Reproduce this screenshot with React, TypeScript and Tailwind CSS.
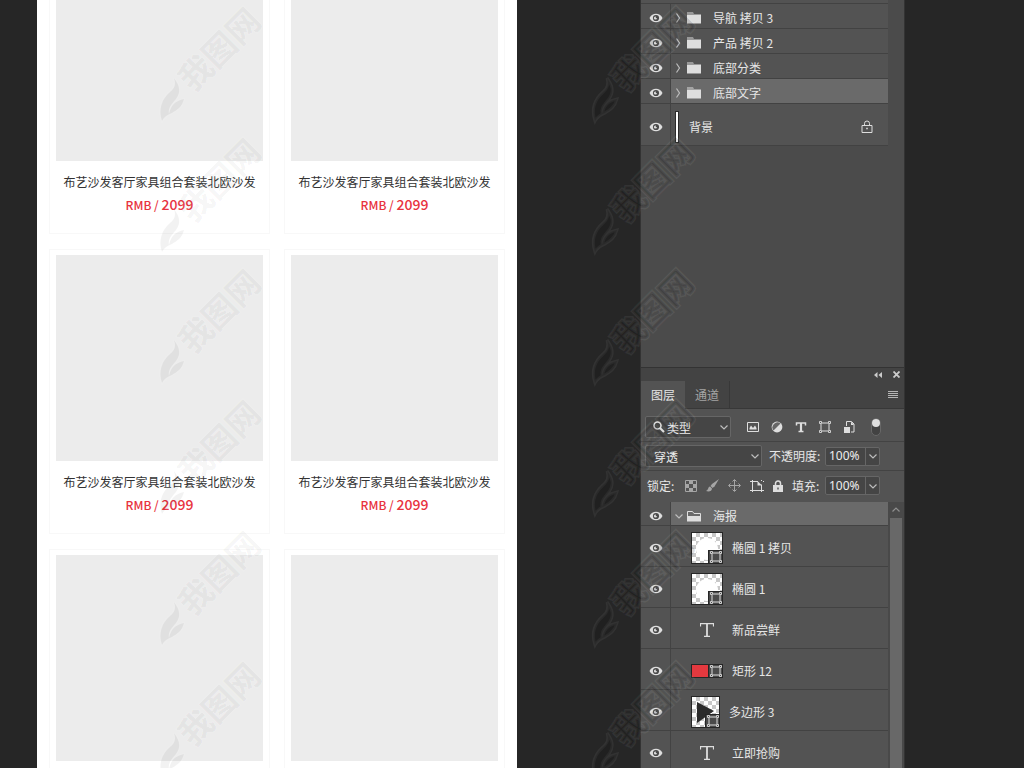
import { ReactNode } from "react";

const FONT = "font-['Noto_Sans_CJK_SC','Noto_Sans',sans-serif]";

function Eye() {
  return (
    <svg viewBox="0 0 14 10" className="h-[10px] w-[14px]" fill="none">
      <path d="M0.5 5C2 2 4.300 0.800 7 0.800S12 2 13.500 5C12 8 9.700 9.200 7 9.200S2 8 0.500 5Z" fill="#dedede" />
      <circle cx="7" cy="5" r="3.100" fill="#4a4a4a" />
      <circle cx="6.500" cy="5" r="1.600" fill="#dedede" />
      <circle cx="7.700" cy="4.200" r="1" fill="#4a4a4a" />
    </svg>
  );
}

function Chevron({ dir = "down", className = "" }: { dir?: "down" | "right" | "up"; className?: string }) {
  const d = {
    down: "M1.5 3.5 5 7l3.500-3.500",
    right: "M3.500 0.500 6.500 5 3.500 9.500",
    up: "M1.500 6.500 5 3l3.500 3.500",
  }[dir];
  return (
    <svg viewBox="0 0 10 10" className={`h-[10px] w-[10px] shrink-0 ${className}`} fill="none" stroke="#bdbdbd" strokeWidth="1.200">
      <path d={d} />
    </svg>
  );
}

function Folder({ open = false }: { open?: boolean }) {
  return (
    <svg viewBox="0 0 14 12" className="h-[12px] w-[14px] shrink-0" fill="none">
      {open ? (
        <path d="M0.500 7V1.500h5L7 3.500h6.500V7" stroke="#dedede" />
      ) : (
        <path d="M0 0.500h6l1 1H0Z" fill="#dedede" />
      )}
      <path d={open ? "M0 6h14v5.500H0Z" : "M0 2.500h14V11.500H0Z"} fill="#dedede" />
    </svg>
  );
}

function ShapeIcon() {
  return (
    <svg viewBox="0 0 12 12" className="h-3 w-3" fill="none" stroke="#dedede">
      <path d="M2 3v6M10 3v6M3 2h6M3 10h6" />
      <path d="M0.500 0.500h2v2h-2ZM9.500 0.500h2v2h-2ZM0.500 9.500h2v2h-2ZM9.500 9.500h2v2h-2Z" strokeWidth="0.900" />
    </svg>
  );
}

function Checker({ children, className }: { children?: ReactNode; className: string }) {
  return (
    <span
      className={`relative block h-8 border border-[#262626] bg-[conic-gradient(#c8c8c8_25%,#fff_0_50%,#c8c8c8_0_75%,#fff_0)] bg-[size:8px_8px] ${className}`}
    >
      {children}
      <span className="absolute right-0 bottom-0 flex h-[13px] w-[14px] items-center justify-center border-t border-l border-[#262626] bg-[#4a4a4a]">
        <ShapeIcon />
      </span>
    </span>
  );
}

const EllipseThumb = () => (
  <Checker className="w-8">
    <svg viewBox="0 0 30 30" className="block h-[30px] w-[30px]">
      <circle cx="15" cy="16" r="11" fill="#fff" />
    </svg>
  </Checker>
);

const PolygonThumb = () => (
  <Checker className="w-[29px]">
    <svg viewBox="0 0 27 30" className="block h-[30px] w-[27px]">
      <path d="M5 5 22 14 5 26Z" fill="#2b2b2b" />
    </svg>
  </Checker>
);

const RectThumb = () => (
  <span className="flex h-[14px] w-8 items-center justify-end border border-[#262626] bg-[#e4393f]">
    <span className="flex h-full w-[14px] items-center justify-center border-l border-[#262626] bg-[#4a4a4a]">
      <ShapeIcon />
    </span>
  </span>
);

const TextThumb = () => (
  <svg viewBox="0 0 14 14" className="ml-[9px] h-[14px] w-[14px]" fill="none" stroke="#dedede">
    <path d="M0.500 3.500V0.700h13v2.800M4 13.300h6" strokeWidth="1.200" />
    <path d="M7 1v12" strokeWidth="1.800" />
  </svg>
);

const groups = ["导航 拷贝 3", "产品 拷贝 2", "底部分类", "底部文字"];

const layers = [
  { name: "椭圆 1 拷贝", thumb: <EllipseThumb /> },
  { name: "椭圆 1", thumb: <EllipseThumb /> },
  { name: "新品尝鲜", thumb: <TextThumb /> },
  { name: "矩形 12", thumb: <RectThumb /> },
  { name: "多边形 3", thumb: <PolygonThumb />, tight: true },
  { name: "立即抢购", thumb: <TextThumb /> },
];

function Row({ children, height, selected = false }: { children: ReactNode; height: string; selected?: boolean }) {
  return (
    <li className={`flex shrink-0 ${height} border-b border-[#424242]`}>
      <button
        aria-label="显示图层"
        className="flex w-[30px] shrink-0 items-center justify-center border-r border-[#434343] pt-1"
      >
        <Eye />
      </button>
      <div className={`flex flex-1 items-center pt-1 ${selected ? "bg-[#6a6a6a]" : ""}`}>{children}</div>
    </li>
  );
}

function ProductCard({ caption = true }: { caption?: boolean }) {
  return (
    <article className="h-[285px] border border-[#f8f8f8] px-[6px] pt-[5px] text-center">
      <div className="h-[206px] bg-[#ececec]" />
      {caption && (
        <>
          <h3 className="mt-[11px] text-[12px] leading-5 text-[#333]">布艺沙发客厅家具组合套装北欧沙发</h3>
          <p className="text-[12px] leading-6 font-medium text-[#e8323e]">
            RMB / <span className="text-[14px]">2099</span>
          </p>
        </>
      )}
    </article>
  );
}

function Percent({ id }: { id: string }) {
  return (
    <span className="flex h-[19px] w-[55px] shrink-0 rounded-[2px] border border-[#666] bg-[#454545]">
      <input
        id={id}
        defaultValue="100%"
        className="w-[39px] bg-transparent pl-[3px] font-['Noto_Sans',sans-serif] text-[12px] text-[#eee] outline-none"
      />
      <button aria-label="调整数值" className="flex flex-1 items-center justify-center border-l border-[#666]">
        <Chevron />
      </button>
    </span>
  );
}

function Select({ label, value, className, inset }: { label: string; value: string; className: string; inset: string }) {
  return (
    <span className={`relative flex h-[22px] items-center ${className}`}>
      <select
        aria-label={label}
        className={`h-full w-full appearance-none rounded-[2px] border border-[#666] bg-[#454545] pt-[2px] text-[12px] text-[#eee] ${inset}`}
      >
        <option>{value}</option>
      </select>
      <Chevron className="pointer-events-none absolute right-[2px]" />
    </span>
  );
}

function FilterBar() {
  return (
    <div className="flex h-[33px] items-center border-b border-[#434343] pt-1 pl-1">
      <span className="relative flex items-center">
        <Select label="筛选" value="类型" className="w-[86px]" inset="pl-[21px]" />
        <svg viewBox="0 0 12 12" className="pointer-events-none absolute left-2 h-3 w-3" fill="none" stroke="#dedede">
          <circle cx="4.500" cy="4.500" r="3.500" strokeWidth="1.600" />
          <path d="m7 7 4 4" strokeWidth="2.200" />
        </svg>
      </span>
      <div className="ml-4 flex items-center gap-3">
        <button aria-label="像素图层">
          <svg viewBox="0 0 12 12" className="h-3 w-3" fill="none">
            <path d="M0.500 1.500h11v9H0.500Z" stroke="#dedede" />
            <path d="M2.500 8.500V7l1.500-2.500L6 7l2-2.500L9.500 7v1.500Z" fill="#dedede" />
          </svg>
        </button>
        <button aria-label="调整图层">
          <svg viewBox="0 0 12 12" className="h-3 w-3" fill="none">
            <circle cx="6" cy="6" r="5.400" fill="#dedede" />
            <path d="M2.500 9.500A5 5 0 0 1 9.500 2.500Z" fill="#666" />
          </svg>
        </button>
        <button aria-label="文字图层">
          <svg viewBox="0 0 12 12" className="h-3 w-3" fill="none" stroke="#dedede">
            <path d="M1.500 4.500V2h9v2.500M3.500 10.500h5" strokeWidth="1.500" />
            <path d="M6 2v8.500" strokeWidth="2.200" />
          </svg>
        </button>
        <button aria-label="形状图层">
          <ShapeIcon />
        </button>
        <button aria-label="智能对象">
          <svg viewBox="0 0 12 12" className="h-3 w-3" fill="none">
            <path d="M3.500 5V0.500h5l2.500 2.500V11H8" stroke="#dedede" />
            <path d="M8 0.500V4h3M1 6h6v6H1Z" fill="#dedede" />
          </svg>
        </button>
      </div>
      <button
        aria-label="图层过滤开关"
        className="ml-4 flex h-[18px] w-[10px] items-start rounded-full border border-[#686868] bg-[#424242]"
      >
        <span className="block h-2 w-2 rounded-full bg-[#dedede]" />
      </button>
    </div>
  );
}

function LockBar() {
  return (
    <div className="flex h-[31px] items-center pb-[2px] pl-[6px]">
      <span className="w-[32px] whitespace-nowrap">锁定:</span>
      <div className="ml-[6px] flex items-center gap-[9px]">
        <button aria-label="锁定透明像素">
          <svg viewBox="0 0 12 12" className="h-3 w-3" fill="none">
            <path d="M0.500 0.500h11v11H0.500Z" stroke="#a5a5a5" />
            <path d="M4 1h4v3H4ZM1 4h3v4H1ZM8 4h3v4H8ZM4 8h4v3H4Z" fill="#a5a5a5" />
          </svg>
        </button>
        <button aria-label="锁定图像像素">
          <svg viewBox="0 0 13 13" className="h-[13px] w-[13px]" fill="#a5a5a5">
            <path d="M13 0 6 5 4.500 7 6.500 9 8.500 7.500Z" />
            <path d="M4 7.500C2 7.500 2.500 11 0 12c3 1.200 6 0 6-2.500Z" />
          </svg>
        </button>
        <button aria-label="锁定位置">
          <svg viewBox="0 0 13 13" className="h-[13px] w-[13px]" fill="none" stroke="#a5a5a5">
            <path d="M6.500 1v11M1 6.500h11M4.500 2.500l2-2 2 2M4.500 10.500l2 2 2-2M2.500 4.500l-2 2 2 2M10.500 4.500l2 2-2 2" />
          </svg>
        </button>
        <button aria-label="锁定画板">
          <svg viewBox="0 0 14 13" className="h-[13px] w-[14px]" fill="none" stroke="#dedede">
            <path d="M0 2.500h8M2.500 1v12M0 11.500h14M11.500 5.500V13M11.500 1v1M13 2.500h1" />
            <path d="M7.500 2v4.500h4.500Z" fill="#dedede" stroke="none" />
          </svg>
        </button>
        <button aria-label="锁定全部">
          <svg viewBox="0 0 10 12" className="h-3 w-[10px]" fill="none">
            <path d="M2.500 6V3.500a2.500 2.500 0 0 1 5 0V6" stroke="#dedede" strokeWidth="1.500" />
            <path fillRule="evenodd" d="M0 5h10v7H0ZM4.300 7.500v2h1.400v-2Z" fill="#dedede" />
          </svg>
        </button>
      </div>
      <label htmlFor="fill" className="ml-[9px] w-[33px] whitespace-nowrap">
        填充:
      </label>
      <Percent id="fill" />
    </div>
  );
}

function LayersPanel() {
  return (
    <aside className="flex w-[265px] shrink-0 flex-col overflow-hidden border-x border-[#333] bg-[#535353] text-[12px] leading-4 text-[#e6e6e6]">
      {/* Upper layer list */}
      <section className="h-[367px] shrink-0 bg-[#4b4b4b] pr-4">
        <div className="h-1 border-b border-[#424242] bg-[#535353]" />
        <ul className="bg-[#535353]">
          {groups.map((name, i) => (
            <Row key={name} height="h-[25px]" selected={i === groups.length - 1}>
              <Chevron dir="right" className="ml-[2px]" />
              <span className="ml-1 flex">
                <Folder />
              </span>
              <span className="ml-3">{name}</span>
            </Row>
          ))}
          <Row height="h-[42px]">
            <span className="ml-1 h-8 w-1 border border-[#2b2b2b] bg-white" />
            <span className="ml-[10px] flex-1">背景</span>
            <svg viewBox="0 0 12 13" className="mr-[15px] h-[13px] w-3" fill="none" stroke="#dedede">
              <path d="M1 5.500h10v7H1ZM3.500 5.500v-2a2.500 2.500 0 0 1 5 0v2" />
              <path d="M5.200 8.500h1.600" strokeWidth="1.500" />
            </svg>
          </Row>
        </ul>
      </section>

      {/* Panel header */}
      <header className="shrink-0 border-t border-[#333] bg-[#434343]">
        <div className="flex h-[13px] items-center justify-end gap-[11px] pr-1">
          <button aria-label="折叠">
            <svg viewBox="0 0 8 6" className="h-[6px] w-2" fill="#ccc">
              <path d="M3.500 0v6L0 3ZM8 0v6L4.500 3Z" />
            </svg>
          </button>
          <button aria-label="关闭">
            <svg viewBox="0 0 7 7" className="h-[7px] w-[7px]" stroke="#ccc" strokeWidth="1.800">
              <path d="m0.500 0.500 6 6M6.500 0.500l-6 6" />
            </svg>
          </button>
        </div>
        <div className="flex h-7">
          <button className="w-[44px] bg-[#535353]">图层</button>
          <button className="w-[45px] border-r border-b border-[#383838] text-[#a5a5a5]">通道</button>
          <div className="flex flex-1 items-center justify-end border-b border-[#383838] pr-[6px]">
            <button aria-label="面板菜单">
              <svg viewBox="0 0 10 8" className="h-2 w-[10px]" stroke="#b5b5b5">
                <path d="M0 0.500h10M0 2.500h10M0 4.500h10M0 6.500h10" />
              </svg>
            </button>
          </div>
        </div>
      </header>

      <FilterBar />
      <div className="flex h-[29px] items-center border-b border-[#434343] pl-1">
        <Select label="混合模式" value="穿透" className="w-[117px]" inset="pl-2" />
        <label htmlFor="opacity" className="ml-[7px] w-[56px] whitespace-nowrap">
          不透明度:
        </label>
        <Percent id="opacity" />
      </div>
      <LockBar />

      {/* Lower layer list */}
      <div className="flex min-h-0 flex-1 overflow-hidden">
        <ul className="flex-1">
          <Row height="h-[24px]" selected>
            <Chevron className="ml-[3px]" />
            <span className="ml-[3px] flex">
              <Folder open />
            </span>
            <span className="ml-3">海报</span>
          </Row>
          {layers.map((layer) => (
            <Row key={layer.name} height="h-[41px]">
              <span className={`ml-5 shrink-0 ${layer.tight ? "w-[38px]" : "w-[41px]"}`}>{layer.thumb}</span>
              <span>{layer.name}</span>
            </Row>
          ))}
        </ul>
        <div className="flex w-4 flex-col items-center bg-[#494949]">
          <Chevron dir="up" className="my-[3px] opacity-60" />
          <div className="w-3 flex-1 bg-[#686868]" />
        </div>
      </div>
    </aside>
  );
}

function Watermark() {
  return (
    <svg
      viewBox="0 0 120 120"
      className="h-[120px] w-[120px] shrink-0 overflow-visible"
      stroke="#fff"
      strokeOpacity="0.06"
      strokeWidth="3"
      paintOrder="stroke"
    >
      <path d="M10 116c-4-12 0-22 8-29 5-4 6-8 4-14 6 8 7 14 2 21-5 6-8 9-7 15 2-9 6-13 15-15-2 8-7 11-12 14-5 2-8 4-10 8Z" />
      <text transform="translate(41 88) rotate(-45)" className="text-[33px] font-bold">
        我图网
      </text>
    </svg>
  );
}

// The stamp needs a stronger tint over the dark chrome than over the white canvas
const watermarkColumns = ["left-[152px] fill-black/5", "left-[585px] fill-black/15"];

export default function App() {
  return (
    <div className={`relative flex h-screen overflow-hidden bg-[#262626] pl-[37px] ${FONT}`}>
      <main className="w-[480px] shrink-0 overflow-hidden bg-white px-3">
        <div className="-mt-[51px] grid grid-cols-2 gap-x-[14px] gap-y-[15px]">
          {Array.from({ length: 6 }, (_, i) => (
            <ProductCard key={i} caption={i < 4} />
          ))}
        </div>
      </main>
      <div className="w-[123px] shrink-0" />
      <LayersPanel />

      {/* Watermark overlay */}
      {watermarkColumns.map((column) => (
        <div
          key={column}
          aria-hidden="true"
          className={`pointer-events-none absolute inset-y-0 flex flex-col gap-[11px] overflow-visible pt-[5px] ${column}`}
        >
          {Array.from({ length: 6 }, (_, i) => (
            <Watermark key={i} />
          ))}
        </div>
      ))}
    </div>
  );
}
